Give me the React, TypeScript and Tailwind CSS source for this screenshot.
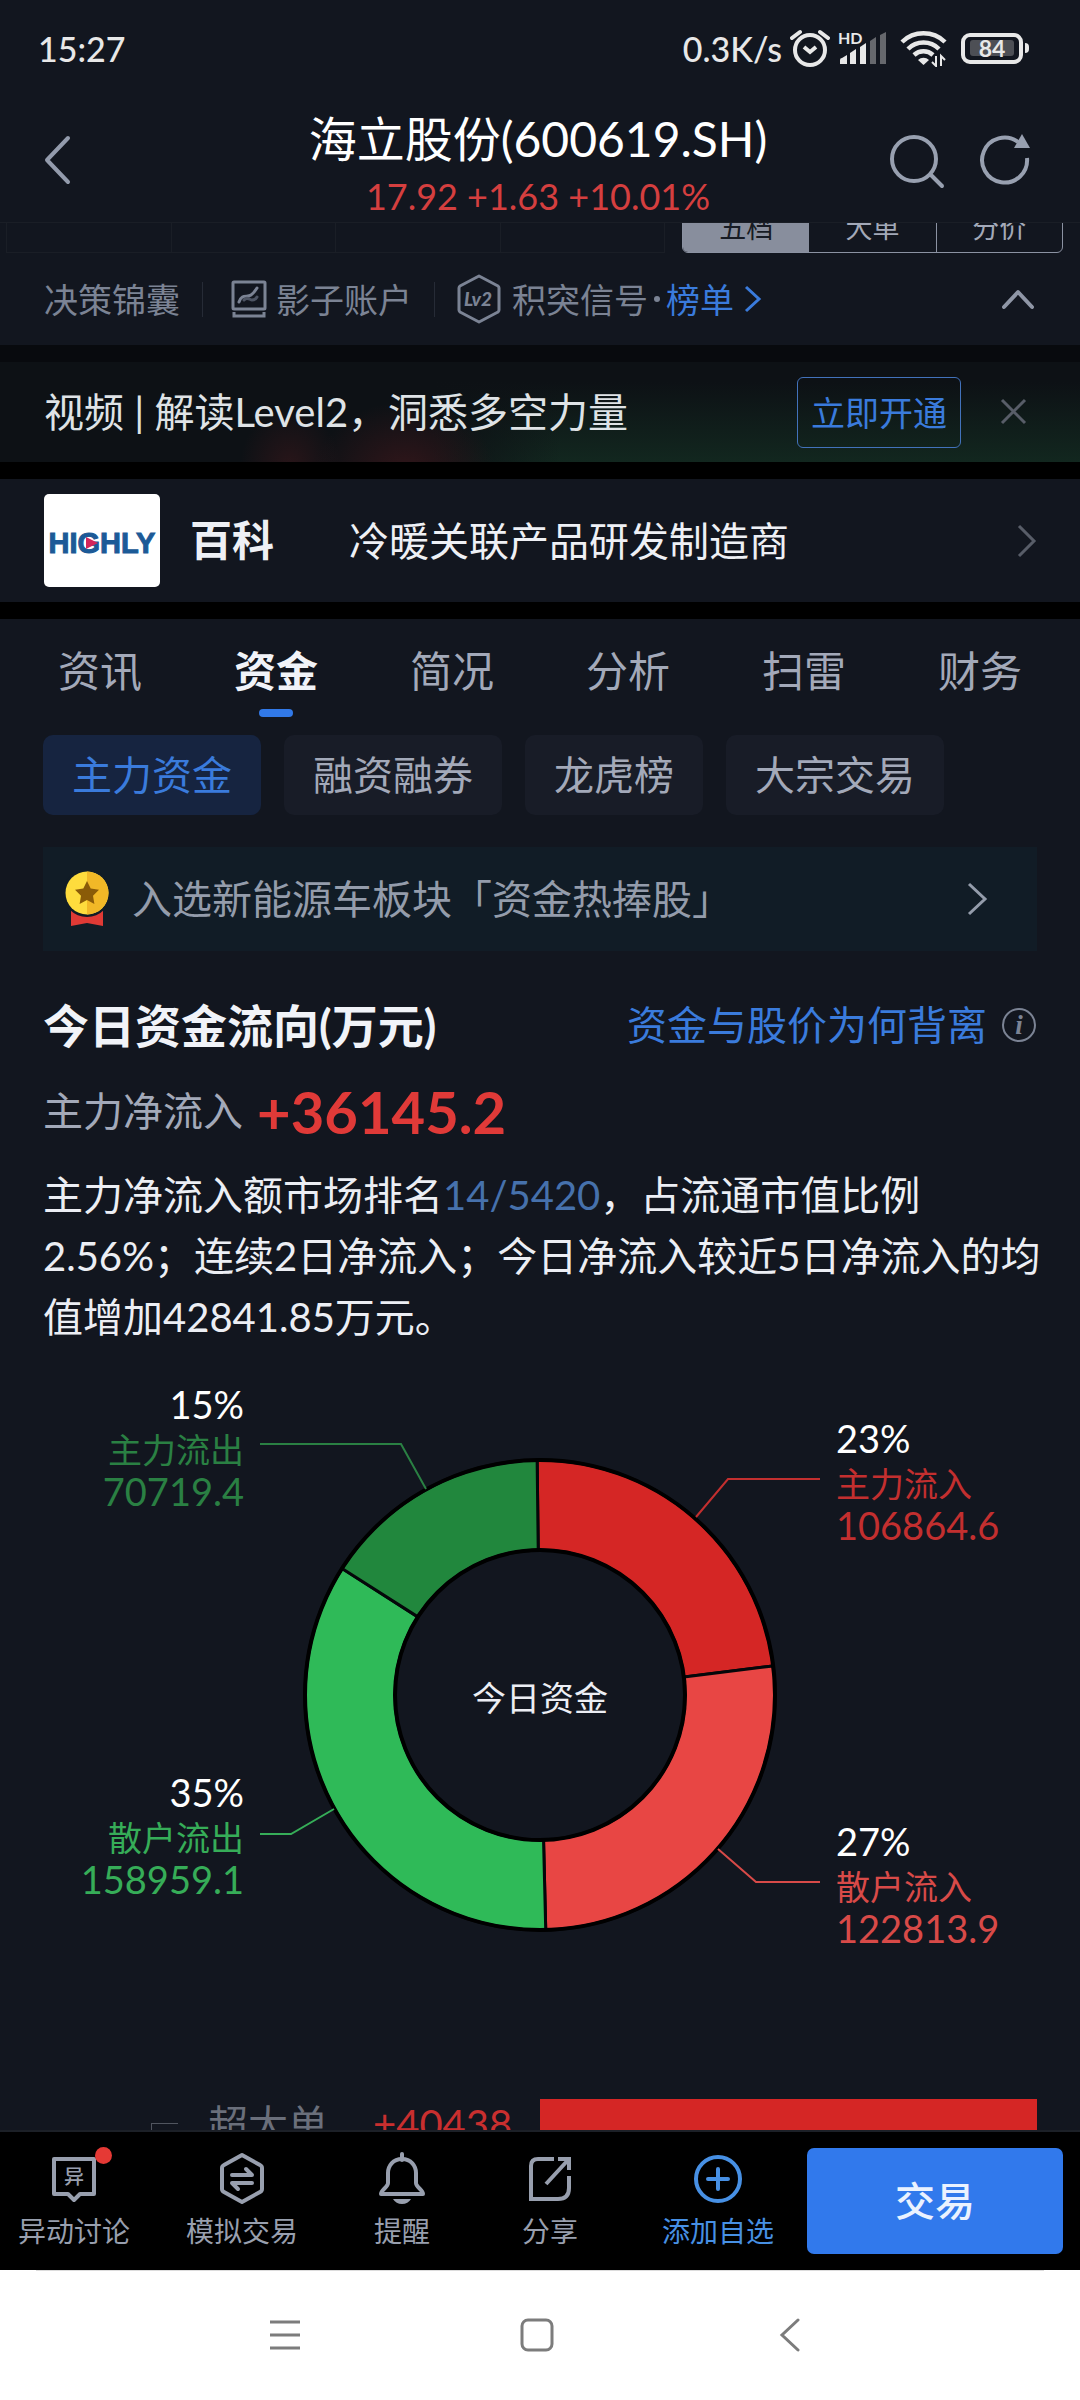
import React, { useState } from 'react';

const tabs = ['资讯', '资金', '简况', '分析', '扫雷', '财务'];
const chips = ['主力资金', '融资融券', '龙虎榜', '大宗交易'];

interface Slice {
  name: string;
  percent: string;
  value: string;
  color: string;
  textColor: string;
  from: number;
  to: number;
  line: string;
  x: number;
  y: number;
  anchor: 'start' | 'end';
}

const slices: Slice[] = [
  { name: '主力流入', percent: '23%', value: '106864.6', color: '#d52625', textColor: '#c32f2f', from: -0.7, to: 82.9, line: '696,169 728,131 820,131', x: 836, y: 91, anchor: 'start' },
  { name: '散户流入', percent: '27%', value: '122813.9', color: '#e84644', textColor: '#d84a48', from: 82.9, to: 178.6, line: '718,501 756,534 820,534', x: 836, y: 494, anchor: 'start' },
  { name: '散户流出', percent: '35%', value: '158959.1', color: '#2fba58', textColor: '#36ad58', from: 178.6, to: 302.6, line: '334,461 291,486 260,486', x: 244, y: 445, anchor: 'end' },
  { name: '主力流出', percent: '15%', value: '70719.4', color: '#21873d', textColor: '#2a8043', from: 302.6, to: 359.3, line: '426,141 401,96 260,96', x: 244, y: 57, anchor: 'end' },
];

const CX = 540;
const CY = 347;

const point = (angle: number, r: number) => {
  const rad = ((angle - 90) * Math.PI) / 180;
  return `${(CX + r * Math.cos(rad)).toFixed(2)} ${(CY + r * Math.sin(rad)).toFixed(2)}`;
};

const arcPath = (from: number, to: number) => {
  const outer = 235;
  const inner = 145;
  return `M${point(from, outer)} A${outer} ${outer} 0 0 1 ${point(to, outer)} L${point(to, inner)} A${inner} ${inner} 0 0 0 ${point(from, inner)} Z`;
};

const FlowChart: React.FC = () => (
  <svg viewBox="0 0 1080 620" className="block w-full" role="img" aria-label="今日资金">
    {slices.map(s => (
      <path key={s.name} d={arcPath(s.from, s.to)} fill={s.color} stroke="#05070a" strokeWidth="3" />
    ))}
    <circle cx={CX} cy={CY} r="235" fill="none" stroke="#000" strokeWidth="4" />
    <circle cx={CX} cy={CY} r="145" fill="none" stroke="#000" strokeWidth="4" />
    {slices.map(s => (
      <g key={s.name} textAnchor={s.anchor}>
        <polyline points={s.line} fill="none" stroke={s.textColor} strokeWidth="2" />
        <text x={s.x} y={s.y + 14} className="text-[38px]" fill="#fff">{s.percent}</text>
        <text x={s.x} y={s.y + 58} className="text-[34px]" fill={s.textColor}>{s.name}</text>
        <text x={s.x} y={s.y + 101} className="text-[38px]" fill={s.textColor}>{s.value}</text>
      </g>
    ))}
    <text x="540" y="363" textAnchor="middle" className="text-[34px]" fill="#eceef4">今日资金</text>
  </svg>
);

const StatusBar: React.FC = () => (
  <div className="flex h-[96px] items-center justify-between pl-[38px] pr-[57px] text-[34px] font-medium text-[#e8e8e8]">
    <span>15:27</span>
    <div className="flex items-center">
      <span>0.3K/s</span>
      <svg width="40" height="38" viewBox="0 0 40 38" className="ml-2" fill="none" stroke="#e8e8e8">
        <circle cx="20" cy="21" r="15" strokeWidth="4" />
        <path d="M14 18l6 5 6-5" strokeWidth="4" />
        <path d="M2 9l8-6M38 9l-8-6" strokeWidth="4" strokeLinecap="round" />
      </svg>
      <svg width="52" height="36" viewBox="0 0 52 36" className="ml-2 overflow-visible" fill="#e8e8e8">
        <text x="0" y="14" className="text-[16px] font-bold">HD</text>
        <path d="M2 34v-4q0-2 2-2l5-3v9zM12 34V23l6-4v15zM22 34V17l6-4v21z" />
        <path d="M32 34V11l6-4v27zM42 34V5l6-3v32z" fill="#66686d" />
      </svg>
      <svg width="48" height="38" viewBox="0 0 48 38" className="ml-[10px]" fill="none" stroke="#e8e8e8" strokeWidth="4.5">
        <path d="M2 13a31 31 0 0 1 43 0" />
        <path d="M8 20a22 22 0 0 1 31 0" />
        <path d="M14 26a14 14 0 0 1 19 0" />
        <path d="M18 31a8 8 0 0 1 11 0l-5.500 5z" fill="#e8e8e8" stroke="none" />
        <path d="M36 27v10l-4-4M41 37V27l4 4" strokeWidth="2" />
      </svg>
      <div className="relative ml-[13px] flex h-[31px] w-[62px] items-center justify-center rounded-[9px] border-4 border-[#e8e8e8]">
        <div className="flex h-4 w-[44px] items-center justify-center rounded-[3px] bg-[#4d4f55] text-[23px] leading-none font-bold">84</div>
        <div className="absolute -right-[10px] h-[10px] w-1 rounded-r bg-[#e8e8e8]" />
      </div>
    </div>
  </div>
);

const Header: React.FC = () => (
  <header className="flex h-[127px] items-start justify-between border-b border-[#1a1e26] pl-[44px] pr-[48px]">
    <button aria-label="返回" className="mt-[38px] w-[144px]">
      <svg width="28" height="52" viewBox="0 0 28 52" fill="none" stroke="#939bac" strokeWidth="4" strokeLinecap="round" strokeLinejoin="round">
        <path d="M24 4L3 26l21 22" />
      </svg>
    </button>
    <div className="flex flex-col items-center pt-[13px]">
      <h1 className="text-[48px] leading-[60px] text-white">海立股份(600619.SH)</h1>
      <p className="text-[36px] leading-[54px] text-[#d53f3f]">17.92 +1.63 +10.01%</p>
    </div>
    <div className="flex w-[144px] gap-[33px] pt-[37px]">
      <button aria-label="搜索">
        <svg width="58" height="56" viewBox="0 0 58 56" fill="none" stroke="#98a0b0" strokeWidth="4" strokeLinecap="round">
          <circle cx="26" cy="26" r="22" />
          <path d="M43 42l11 11" />
        </svg>
      </button>
      <button aria-label="刷新">
        <svg width="52" height="56" viewBox="0 0 52 56" fill="none" stroke="#98a0b0" strokeWidth="4">
          <path d="M39 9A22.500 22.500 0 1 0 48 25" />
          <path d="M43 1l8 14-16 0z" fill="#98a0b0" stroke="none" />
        </svg>
      </button>
    </div>
  </header>
);

// lower edge of the quote chart, scrolled under the header
const ChartEdge: React.FC = () => (
  <div className="flex h-[30px] items-end overflow-hidden pl-[6px] pr-[17px]">
    <div className="grid h-[30px] flex-1 grid-cols-4 border-b border-l border-[#1a1e26]">
      <div className="border-r border-[#1a1e26]" />
      <div className="border-r border-[#1a1e26]" />
      <div className="border-r border-[#1a1e26]" />
      <div className="border-r border-[#1a1e26]" />
    </div>
    <div className="ml-[17px] grid h-[56px] w-[381px] shrink-0 grid-cols-3 overflow-hidden rounded-[6px] border border-[#8b92a2] text-[27px] leading-[60px] text-[#a3a9b8]">
      <button className="bg-[#888e9d] text-[#171b24]">五档</button>
      <button>大单</button>
      <button className="border-l border-[#8b92a2]">分价</button>
    </div>
  </div>
);

const ToolRow: React.FC = () => (
  <div className="flex h-[92px] items-center pl-[44px] pr-[44px] text-[34px] text-[#7b8394]">
    <a href="#tips">决策锦囊</a>
    <div className="mx-[22px] h-[35px] w-px bg-[#262b36]" />
    <a href="#shadow" className="ml-[5px] flex items-center gap-2">
      <svg width="38" height="38" viewBox="0 0 38 38" fill="none" stroke="#7b8394" strokeWidth="3">
        <rect x="3" y="2" width="32" height="27" rx="1" />
        <path d="M4 32v4h30v-4" />
        <path d="M9 22c3-9 8-4 12-7 3-2 4-4 6-7" strokeLinecap="round" />
        <path d="M14 20c3-4 6 0 8 0s4-1 5-3" stroke="#4d5463" strokeLinecap="round" />
      </svg>
      影子账户
    </a>
    <div className="mx-[22px] h-[35px] w-px bg-[#262b36]" />
    <a href="#signal" className="flex items-center">
      <svg width="44" height="50" viewBox="0 0 44 50" fill="none" stroke="#7b8394" strokeWidth="3" strokeLinejoin="round">
        <path d="M22 2l19 10q1 1 1 2v22q0 1-1 2L22 48 3 38q-1-1-1-2V14q0-1 1-2z" />
        <text x="21" y="32" textAnchor="middle" fill="#7b8394" stroke="none" className="text-[19px] font-black italic">Lv2</text>
      </svg>
      <span className="ml-[11px]">积突信号</span>
      <span className="mx-[6px] h-[6px] w-[6px] rounded-full bg-[#7b8394]" />
      <span className="text-[#3a7bdc]">榜单</span>
      <svg width="18" height="28" viewBox="0 0 18 28" className="ml-[10px]" fill="none" stroke="#3a7bdc" strokeWidth="3">
        <path d="M2 2l13 12L2 26" />
      </svg>
    </a>
    <button aria-label="收起" className="ml-auto">
      <svg width="36" height="24" viewBox="0 0 36 24" fill="none" stroke="#8f96a6" strokeWidth="4" strokeLinecap="round" strokeLinejoin="round">
        <path d="M4 20L18 5l14 15" />
      </svg>
    </button>
  </div>
);

const PromoBanner: React.FC<{ onClose: () => void }> = ({ onClose }) => (
  <div className="flex h-[100px] items-center bg-[#0d1115] bg-[radial-gradient(90px_70px_at_405px_110px,#3a171bcc,transparent),radial-gradient(50px_60px_at_290px_105px,#30161acc,transparent),linear-gradient(to_right,#0d1115_40%,transparent_52%),linear-gradient(#0d1115_20%,#12271f)] pl-[44px] pr-[47px]">
    <p className="text-[40px] text-[#dfe3e6]">视频 | 解读Level2，洞悉多空力量</p>
    <button className="ml-auto h-[71px] w-[164px] rounded-[6px] border border-[#4272bb] text-[34px] text-[#3a7bdc]">立即开通</button>
    <button aria-label="关闭" onClick={onClose} className="ml-[34px]">
      <svg width="38" height="28" viewBox="0 0 38 28" fill="none" stroke="#585d68" strokeWidth="3">
        <path d="M7 2l23 23M30 2L7 25" />
      </svg>
    </button>
  </div>
);

const Wiki: React.FC = () => (
  <a href="#wiki" className="flex h-[123px] items-center pl-[44px] pr-[43px] text-[#eef0f5]">
    <svg width="116" height="93" viewBox="0 0 116 93" className="rounded-[5px] bg-white" role="img" aria-label="HIGHLY">
      <text x="58" y="59" textAnchor="middle" fill="#1c5a97" stroke="#1c5a97" strokeWidth="1" className="font-['Liberation_Sans'] text-[29px] font-bold">HIGHLY</text>
      <path d="M42 43l12 6-12 6z" fill="#d3265c" />
    </svg>
    <span className="ml-[30px] text-[42px] font-bold">百科</span>
    <span className="ml-[75px] text-[40px]">冷暖关联产品研发制造商</span>
    <svg width="20" height="34" viewBox="0 0 20 34" className="ml-auto" fill="none" stroke="#585d68" strokeWidth="3">
      <path d="M2 2l15 15L2 32" />
    </svg>
  </a>
);

const Medal: React.FC = () => (
  <svg width="46" height="58" viewBox="0 0 46 58">
    <path d="M7 40h32v16l-16-3-16 3z" fill="#e03a35" />
    <circle cx="23" cy="23" r="24" fill="#111c26" />
    <circle cx="23" cy="23" r="21.500" fill="#fedc3d" />
    <path d="M23 1.500a21.500 21.500 0 0 1 0 43z" fill="#f1b827" />
    <path d="M23 11l3.700 7.600 8.300 1.200-6 5.900 1.400 8.300-7.400-3.900-7.400 3.900 1.400-8.300-6-5.900 8.300-1.200z" fill="#8a5b08" />
  </svg>
);

const iconProps = { width: 52, height: 54, viewBox: '0 0 52 54', fill: 'none', stroke: 'currentColor', strokeWidth: 4 };

const ActionBar: React.FC = () => (
  <footer className="flex h-[140px] shrink-0 items-center border-t-2 border-[#1c2027] bg-black pl-[18px] pr-[17px] text-[28px] leading-[40px] text-[#989fae]">
    <div className="flex flex-1 justify-between pr-[33px]">
      <button className="relative flex flex-col items-center gap-[6px]">
        <svg {...iconProps}>
          <path d="M6 8h40v35H32l-6 6-6-6H6z" strokeLinejoin="round" />
          <text x="26" y="33" textAnchor="middle" fill="currentColor" stroke="none" className="text-[20px] font-medium">异</text>
        </svg>
        异动讨论
        <span className="absolute -top-1 right-[18px] h-[17px] w-[17px] rounded-full bg-[#e53935]" />
      </button>
      <button className="flex flex-col items-center gap-[6px]">
        <svg {...iconProps} strokeLinejoin="round">
          <path d="M26 4l18 10q2 1 2 3v21q0 2-2 3L26 51 8 41q-2-1-2-3V17q0-2 2-3z" />
          <path d="M16 24h20l-6-6M36 32H16l6 6" strokeLinecap="round" />
        </svg>
        模拟交易
      </button>
      <button className="ml-5 mr-9 flex flex-col items-center gap-[6px]">
        <svg {...iconProps} strokeLinejoin="round">
          <path d="M26 3v6" strokeLinecap="round" />
          <path d="M26 8c-9 0-14 7-14 14v10c0 4-7 7-7 11h42c0-4-7-7-7-11V22c0-7-5-14-14-14z" />
          <path d="M17 48h18q-3 5-9 5t-9-5z" fill="currentColor" stroke="none" />
        </svg>
        提醒
      </button>
      <button className="mr-7 flex flex-col items-center gap-[6px]">
        <svg {...iconProps}>
          <path d="M30 8H14q-7 0-7 7v33h27q11 0 11-11V25" />
          <path d="M34 8h11v11M45 8L22 33" />
        </svg>
        分享
      </button>
      <button className="flex flex-col items-center gap-[6px] text-[#4790e4]">
        <svg {...iconProps}>
          <circle cx="26" cy="28" r="22" />
          <path d="M16 28h20M26 18v20" strokeLinecap="round" />
        </svg>
        添加自选
      </button>
    </div>
    <button className="h-[106px] w-[256px] rounded-[7px] bg-[#3179ec] text-[40px] font-medium text-[#eaf2ff]">交易</button>
  </footer>
);

const NavBar: React.FC = () => (
  <nav className="h-[130px] shrink-0 bg-white">
    <div className="mx-[36px] flex h-[130px] items-center justify-center gap-[219px] border-t border-[#dcdcdc] pb-[2px] pr-[6px]">
      <button aria-label="菜单">
        <svg width="32" height="34" viewBox="0 0 32 34" stroke="#7c7c7c" strokeWidth="3">
          <path d="M1 4h30M1 17h30M1 30h30" />
        </svg>
      </button>
      <button aria-label="主页">
        <svg width="34" height="34" viewBox="0 0 34 34" fill="none" stroke="#7c7c7c" strokeWidth="3">
          <rect x="2" y="2" width="30" height="30" rx="6" />
        </svg>
      </button>
      <button aria-label="后退">
        <svg width="32" height="34" viewBox="0 0 32 34" fill="none" stroke="#7c7c7c" strokeWidth="3" strokeLinecap="round">
          <path d="M25 2L9 17l16 15" />
        </svg>
      </button>
    </div>
  </nav>
);

const App: React.FC = () => {
  const [activeTab, setActiveTab] = useState('资金');
  const [activeChip, setActiveChip] = useState('主力资金');
  const [showPromo, setShowPromo] = useState(true);

  return (
    <div className="flex h-screen flex-col bg-[#12161f] font-[Lato,'Noto_Sans_CJK_SC',sans-serif]">
      <StatusBar />
      <Header />

      <main className="min-h-0 flex-1 overflow-hidden">
        <ChartEdge />
        <ToolRow />
        <div className="h-[17px] bg-[#080a0e]" />
        {showPromo && <PromoBanner onClose={() => setShowPromo(false)} />}
        <div className="h-[17px] bg-black" />
        <Wiki />
        <div className="h-[17px] bg-black" />

        <div className="flex px-[12px] pt-[22px]">
          {tabs.map(tab => (
            <button
              key={tab}
              onClick={() => setActiveTab(tab)}
              className={`flex flex-1 flex-col items-center gap-2 text-[42px] leading-[60px] ${tab === activeTab ? 'font-bold text-[#f1f3f8]' : 'text-[#a3a9b9]'}`}
            >
              {tab}
              {tab === activeTab && <span className="h-2 w-[34px] rounded-[4px] bg-[#3179e8]" />}
            </button>
          ))}
        </div>

        <div className="px-[43px]">
          <div className="mt-[18px] flex gap-[23px]">
            {chips.map(chip => (
              <button
                key={chip}
                onClick={() => setActiveChip(chip)}
                className={`h-[80px] rounded-[10px] px-[29px] text-[40px] ${chip === activeChip ? 'bg-[#162440] text-[#3a7bdc]' : 'bg-[#181c27] text-[#a3a9b9]'}`}
              >
                {chip}
              </button>
            ))}
          </div>

          <a href="#hot" className="mt-8 flex h-[104px] items-center bg-[#111c26] pl-[21px] pr-[48px] text-[40px] text-[#949cab]">
            <Medal />
            <span className="ml-[22px]">入选新能源车板块「资金热捧股」</span>
            <svg width="22" height="34" viewBox="0 0 22 34" className="ml-auto" fill="none" stroke="#949cab" strokeWidth="3">
              <path d="M2 2l16 15L2 32" />
            </svg>
          </a>

          <div className="mt-11 flex h-[60px] items-center justify-between">
            <h2 className="text-[46px] font-bold text-[#f1f3f8]">今日资金流向(万元)</h2>
            <a href="#why" className="flex items-center gap-[14px] text-[40px] text-[#3a7bdc]">
              资金与股价为何背离
              <svg width="36" height="36" viewBox="0 0 36 36" fill="none" stroke="#7b8394" strokeWidth="2">
                <circle cx="18" cy="18" r="16" />
                <text x="18" y="27" textAnchor="middle" fill="#7b8394" stroke="none" className="font-['Liberation_Serif'] text-[27px] font-bold italic">i</text>
              </svg>
            </a>
          </div>

          <div className="mt-6 flex h-16 items-center gap-[14px]">
            <span className="text-[40px] text-[#a3a9b9]">主力净流入</span>
            <span className="text-[58px] font-bold text-[#e03a38]">+36145.2</span>
          </div>

          <p className="-mr-5 mt-[22px] text-[40px] leading-[61px] text-[#eceef4]">
            主力净流入额市场排名<span className="text-[#4671ac]">14/5420</span>，占流通市值比例2.56%；连续2日净流入；今日净流入较近5日净流入的均值增加42841.85万元。
          </p>
        </div>

        <FlowChart />

        <div className="mt-[131px] flex h-[60px] items-start pl-[151px] pr-[43px] text-[40px] leading-[50px]">
          <div className="mt-6 h-9 w-[27px] shrink-0 border-t border-l border-[#50555f]" />
          <span className="ml-[30px] w-[165px] shrink-0 text-[#6a6f7b]">超大单</span>
          <span className="w-[167px] shrink-0 text-[#c92f2f]">+40438</span>
          <div className="h-[60px] flex-1 bg-[#d52625]" />
        </div>
      </main>

      <ActionBar />
      <NavBar />
    </div>
  );
};

export default App;
